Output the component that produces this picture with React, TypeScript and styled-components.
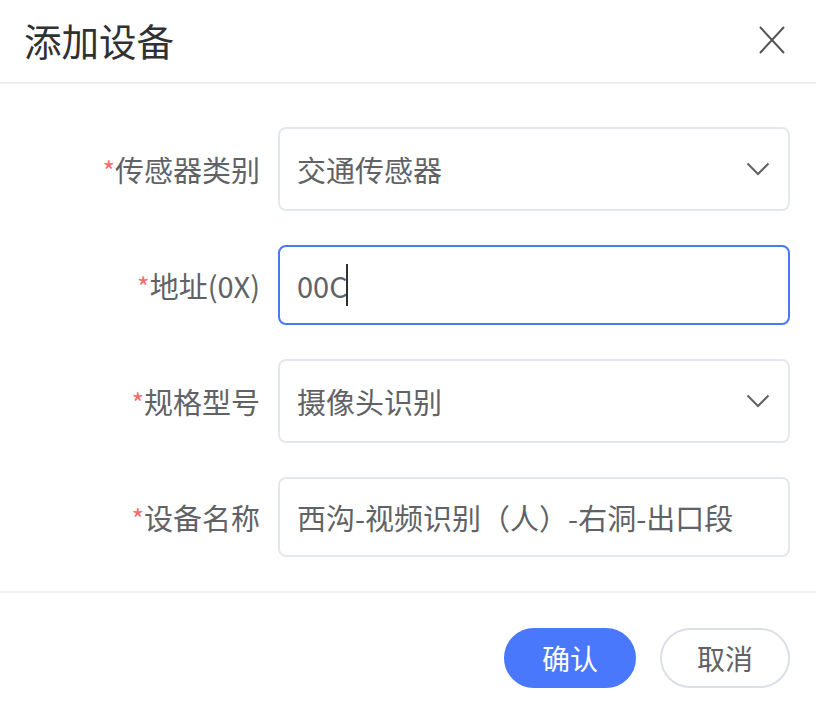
import styled, { createGlobalStyle } from "styled-components";

const GlobalStyle = createGlobalStyle`
  body {
    margin: 0;
    background: #ffffff;
    font-family: "Noto Sans CJK SC", "Noto Sans", sans-serif;
  }
`;

const Dialog = styled.div`
  width: 816px;
  height: 720px;
  background: #fff;
  display: flex;
  flex-direction: column;
`;

const Header = styled.div`
  height: 84px;
  display: flex;
  align-items: center;
  justify-content: space-between;
  padding: 0 30px 0 24px;
  border-bottom: 2px solid #f0f0f0;
  box-sizing: border-box;
`;

const Title = styled.div`
  font-size: 37.5px;
  color: #303133;
  line-height: 1;
  margin-top: -2px;
`;

const CloseBtn = styled.button`
  border: none;
  background: none;
  padding: 0;
  width: 28px;
  height: 28px;
  cursor: pointer;
  display: flex;
  margin-top: -2px;
`;

const Body = styled.div`
  padding: 43px 26px 34px 0;
  display: flex;
  flex-direction: column;
  gap: 34px;
  border-bottom: 2px solid #f0f0f0;
`;

const Row = styled.div`
  display: flex;
  align-items: center;
`;

const Label = styled.div`
  width: 260px;
  padding-right: 18px;
  text-align: right;
  font-size: 29px;
  color: #606266;
  flex-shrink: 0;
`;

const Star = styled.span`
  color: #f56c6c;
  font-size: 27px;
`;

const Field = styled.div<{ $h: number; $active?: boolean }>`
  flex: 1;
  height: ${(p) => p.$h}px;
  box-sizing: border-box;
  border: 2px solid ${(p) => (p.$active ? "#4a78fd" : "#e4e7ed")};
  border-radius: 8px;
  display: flex;
  align-items: center;
  justify-content: space-between;
  padding: 0 18px 0 17px;
  font-size: 29px;
  color: #606266;
  white-space: nowrap;
`;

const Value = styled.span`
  display: flex;
  align-items: center;
`;

const Caret = styled.span`
  display: inline-block;
  width: 2px;
  height: 42px;
  background: #303133;
  margin-left: -2px;
`;

const Footer = styled.div`
  display: flex;
  justify-content: flex-end;
  gap: 24px;
  padding: 35px 26px 0 0;
`;

const Button = styled.button<{ $primary?: boolean }>`
  height: 60px;
  width: ${(p) => (p.$primary ? 132 : 130)}px;
  padding: 0;
  border-radius: 30px;
  font-family: inherit;
  font-size: 28px;
  cursor: pointer;
  border: 2px solid ${(p) => (p.$primary ? "#4a78fd" : "#dcdfe6")};
  background: ${(p) => (p.$primary ? "#4a78fd" : "#fff")};
  color: ${(p) => (p.$primary ? "#fff" : "#606266")};
`;

const Chevron = () => (
  <svg width="24" height="14" viewBox="0 0 24 14" fill="none">
    <path d="M1.5 1.5 L12 12 L22.5 1.5" stroke="#606266" strokeWidth="2" />
  </svg>
);

const rows = [
  { label: "传感器类别", value: "交通传感器", select: true, h: 84 },
  { label: "地址(0X)", value: "00C", caret: true, h: 80 },
  { label: "规格型号", value: "摄像头识别", select: true, h: 84 },
  { label: "设备名称", value: "西沟-视频识别（人）-右洞-出口段", h: 80 },
];

export default function App() {
  return (
    <>
      <GlobalStyle />
      <Dialog>
        <Header>
          <Title>添加设备</Title>
          <CloseBtn>
            <svg width="28" height="28" viewBox="0 0 28 28">
              <path d="M2 1 L26 27 M26 1 L2 27" stroke="#555" strokeWidth="2" />
            </svg>
          </CloseBtn>
        </Header>
        <Body>
          {rows.map((r) => (
            <Row key={r.label}>
              <Label>
                <Star>*</Star>
                {r.label}
              </Label>
              <Field $h={r.h} $active={r.caret}>
                <Value>
                  {r.value}
                  {r.caret && <Caret />}
                </Value>
                {r.select && <Chevron />}
              </Field>
            </Row>
          ))}
        </Body>
        <Footer>
          <Button $primary>确认</Button>
          <Button>取消</Button>
        </Footer>
      </Dialog>
    </>
  );
}
